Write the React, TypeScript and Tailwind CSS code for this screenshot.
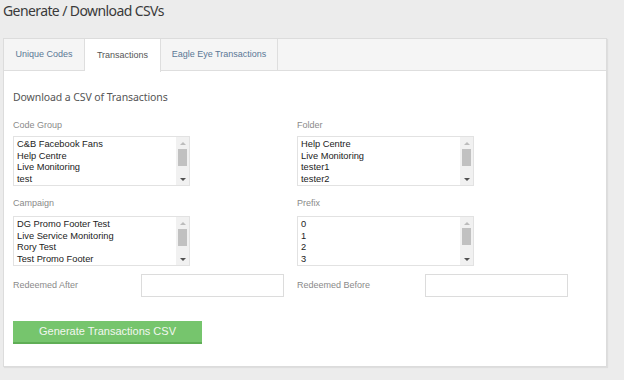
import React from 'react';

const codeGroups = ['C&B Facebook Fans', 'Help Centre', 'Live Monitoring', 'test'];
const folders = ['Help Centre', 'Live Monitoring', 'tester1', 'tester2'];
const campaigns = ['DG Promo Footer Test', 'Live Service Monitoring', 'Rory Test', 'Test Promo Footer'];
const prefixes = ['0', '1', '2', '3'];

function ListBox({ items, thumbTop = 12 }: { items: string[]; thumbTop?: number }) {
  return (
    <div className="relative w-[177px] h-[50px] border border-[#e2e2e2] bg-white overflow-hidden">
      <div className="pl-[3px] pt-[2px] pr-[14px] text-[9.3px] leading-[11.7px] text-[#222] font-['Liberation_Sans',Arial,sans-serif]">
        {items.map((item) => (
          <div key={item} className="whitespace-nowrap">
            {item}
          </div>
        ))}
      </div>
      {/* scrollbar */}
      <div className="absolute right-0 top-0 bottom-0 w-[13px] bg-[#f1f1f1] flex flex-col items-center">
        <div className="h-[11px] flex items-center justify-center">
          <svg width="6" height="4" viewBox="0 0 6 4">
            <path d="M0 4 L3 1 L6 4 Z" fill="#bcbcbc" />
          </svg>
        </div>
        <div className="w-[9px] h-[17px] bg-[#c1c1c1]" style={{ marginTop: thumbTop - 11 }} />
        <div className="flex-1" />
        <div className="h-[11px] flex items-center justify-center">
          <svg width="6" height="4" viewBox="0 0 6 4">
            <path d="M0 0 L6 0 L3 3 Z" fill="#505050" />
          </svg>
        </div>
      </div>
    </div>
  );
}

function Label({ children }: { children: React.ReactNode }) {
  return (
    <div className="h-[14px] leading-[14px] text-[9px] text-[#8a8a8a] font-['Liberation_Sans',Arial,sans-serif]">
      {children}
    </div>
  );
}

export default function App() {
  const tabs = ['Unique Codes', 'Transactions', 'Eagle Eye Transactions'];

  return (
    <div className="w-[624px] h-[380px] bg-[#ececec] overflow-hidden font-['Liberation_Sans',Arial,sans-serif]">
      <h1 className="pl-[3px] pt-[1px] h-[38px] text-[14px] leading-[20px] font-normal tracking-[-0.6px] text-[#3a3a3a] font-['Noto_Sans',sans-serif]">
        Generate / Download CSVs
      </h1>

      <div className="ml-[3px] w-[604px] h-[329px] bg-white border border-[#dcdcdc] shadow-[1px_1px_1px_rgba(0,0,0,0.06)]">
        {/* tabs */}
        <div className="flex h-[32px] bg-[#f5f5f5] border-b border-[#dedede]">
          {tabs.map((tab, i) => {
            const active = i === 1;
            const widths = ['w-[81px]', 'w-[76px]', 'w-[117px]'];
            return (
              <div
                key={tab}
                className={`${widths[i]} h-[32px] flex items-center justify-center text-[9px] border-r border-[#dedede] ${
                  active ? 'bg-white text-[#555] h-[33px] relative z-10' : 'text-[#5b7896]'
                }`}
              >
                {tab}
              </div>
            );
          })}
        </div>

        {/* content */}
        <div className="pl-[9px]">
          <div className="mt-[18px] h-[16px] leading-[16px] text-[10.5px] tracking-[-0.1px] text-[#555] font-['Noto_Sans',sans-serif]">
            Download a CSV of Transactions
          </div>

          <div className="grid grid-cols-[284px_1fr] mt-[13px]">
            <div>
              <Label>Code Group</Label>
              <div className="mt-[4px]">
                <ListBox items={codeGroups} />
              </div>
            </div>
            <div>
              <Label>Folder</Label>
              <div className="mt-[4px]">
                <ListBox items={folders} />
              </div>
            </div>
          </div>

          <div className="grid grid-cols-[284px_1fr] mt-[10px]">
            <div>
              <Label>Campaign</Label>
              <div className="mt-[6px]">
                <ListBox items={campaigns} />
              </div>
            </div>
            <div>
              <Label>Prefix</Label>
              <div className="mt-[6px]">
                <ListBox items={prefixes} thumbTop={11} />
              </div>
            </div>
          </div>

          <div className="grid grid-cols-[284px_1fr] mt-[8px]">
            <div className="flex items-center">
              <div className="w-[128px] text-[9px] text-[#8a8a8a]">Redeemed After</div>
              <div className="w-[143px] h-[23px] border border-[#dcdcdc] bg-white" />
            </div>
            <div className="flex items-center">
              <div className="w-[128px] text-[9px] text-[#8a8a8a]">Redeemed Before</div>
              <div className="w-[143px] h-[23px] border border-[#dcdcdc] bg-white" />
            </div>
          </div>

          <button className="mt-[24px] w-[189px] h-[23px] bg-[#76c56d] border-b-2 border-[#5fae56] text-[#f2f7f0] text-[11px] flex items-center justify-center">
            Generate Transactions CSV
          </button>
        </div>
      </div>
    </div>
  );
}
